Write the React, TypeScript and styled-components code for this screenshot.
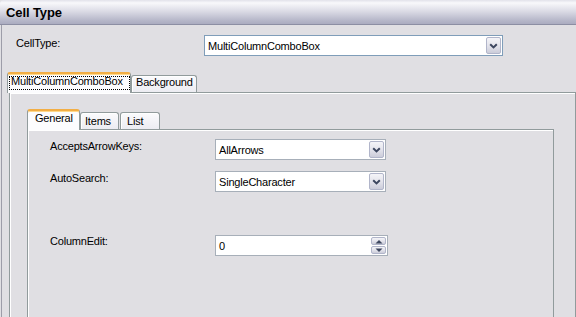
import React from "react";
import styled, { createGlobalStyle } from "styled-components";

const Global = createGlobalStyle`
  html, body { margin: 0; padding: 0; background: #e0dfe3; }
  body {
    font-family: "Liberation Sans", Arial, sans-serif;
    font-size: 11px;
    color: #000;
  }
`;

const Window = styled.div`
  width: 576px;
  height: 317px;
  overflow: hidden;
  display: flex;
  flex-direction: column;
  background: #e0dfe3;
`;

const TitleBar = styled.div`
  flex: none;
  height: 25px;
  box-sizing: border-box;
  border-bottom: 1px solid #8c8ea3;
  border-top-left-radius: 4px;
  background: linear-gradient(
    to bottom,
    #e2e2ea 0%,
    #f8f8fb 12%,
    #d8d8e3 50%,
    #b6b7c9 85%,
    #aaabc0 100%
  );
  padding: 5px 0 0 6px;
  font-size: 13px;
  line-height: 15px;
  font-weight: bold;
  letter-spacing: -0.1px;
`;

const Body = styled.div`
  flex: none;
  margin-left: 1px;
  border-left: 1px solid #9d9da9;
  display: flex;
  flex-direction: column;
`;

const TopRow = styled.div`
  display: flex;
  height: 21px;
  margin-top: 10px;
  padding-left: 14px;
`;

const Label = styled.div<{ $width: number; $top: number }>`
  width: ${(p) => p.$width}px;
  flex: none;
  align-self: flex-start;
  padding-top: ${(p) => p.$top}px;
  line-height: 13px;
  letter-spacing: -0.2px;
`;

const ComboBox = styled.div<{ $width: number; $tone: "blue" | "gray" }>`
  width: ${(p) => p.$width}px;
  height: 21px;
  box-sizing: border-box;
  border: 1px solid ${(p) => (p.$tone === "blue" ? "#7f9db9" : "#a7afb9")};
  background: #fff;
  display: flex;
  align-items: stretch;
`;

const FieldText = styled.div`
  flex: 1;
  display: flex;
  align-items: center;
  padding-left: 3px;
  letter-spacing: -0.2px;
  white-space: nowrap;
`;

const DropButton = styled.div`
  flex: none;
  width: 15px;
  margin: 1px;
  box-sizing: border-box;
  border: 1px solid #b1b5ca;
  border-radius: 2px;
  background: linear-gradient(to bottom, #f4f4f8 0%, #e4e4ec 50%, #cbccd9 100%);
  display: flex;
  align-items: center;
  justify-content: center;
`;

const SpinColumn = styled.div`
  flex: none;
  width: 15px;
  margin: 1px;
  display: flex;
  flex-direction: column;
  gap: 1px;
`;

const SpinButton = styled.div`
  flex: 1;
  box-sizing: border-box;
  border: 1px solid #b1b5ca;
  border-radius: 2px;
  background: linear-gradient(to bottom, #f4f4f8 0%, #e4e4ec 50%, #cbccd9 100%);
  display: flex;
  align-items: center;
  justify-content: center;
`;

const TabControl = styled.div<{ $ml: number; $mt: number }>`
  margin-left: ${(p) => p.$ml}px;
  margin-top: ${(p) => p.$mt}px;
  display: flex;
  flex-direction: column;
`;

const TabStrip = styled.div`
  height: 20px;
  display: flex;
  align-items: flex-end;
  position: relative;
  z-index: 1;
`;

const Tab = styled.div<{ $active?: boolean; $w: number; $ml?: number; $pl: number; $pt: number }>`
  flex: none;
  width: ${(p) => p.$w}px;
  margin-left: ${(p) => p.$ml ?? 0}px;
  box-sizing: border-box;
  height: ${(p) => (p.$active ? 21 : 17)}px;
  margin-bottom: ${(p) => (p.$active ? -1 : 0)}px;
  border: 1px solid #919b9c;
  border-bottom: none;
  border-top: ${(p) => (p.$active ? "2px solid #f2ae45" : "1px solid #919b9c")};
  border-radius: 3px 3px 0 0;
  background: ${(p) =>
    p.$active ? "#fcfcfe" : "linear-gradient(to bottom, #fbfbfd 0%, #ececf2 100%)"};
  box-shadow: ${(p) => (p.$active ? "inset 0 1px 0 #ffd88a" : "inset 1px 1px 0 #fff")};
  padding-left: ${(p) => p.$pl}px;
  padding-top: ${(p) => p.$pt}px;
  line-height: 13px;
  letter-spacing: -0.2px;
  white-space: nowrap;
`;

const FocusRect = styled.div`
  margin: 2px 0 0 1px;
  border: 1px dotted #000;
  line-height: 8px;
  padding: 0 0 4px 1px;
`;

const TabPanel = styled.div<{ $h: number; $pt: number; $pl: number; $pr: number }>`
  height: ${(p) => p.$h}px;
  box-sizing: border-box;
  border: 1px solid #919b9c;
  background: #e0dfe3;
  box-shadow: inset 1px 1px 0 #fff;
  padding: ${(p) => p.$pt}px ${(p) => p.$pr}px 0 ${(p) => p.$pl}px;
  overflow: hidden;
`;

const FieldRow = styled.div<{ $mt: number }>`
  display: flex;
  height: 21px;
  margin-top: ${(p) => p.$mt}px;
`;

const Chevron = () => (
  <svg width="9" height="6" viewBox="0 0 9 6">
    <path d="M1.2 1.2 L4.5 4.4 L7.8 1.2" fill="none" stroke="#3c465f" strokeWidth="2" />
  </svg>
);

const UpArrow = () => (
  <svg width="8" height="5" viewBox="0 0 8 5">
    <path d="M0.5 4.5 L4 1 L7.5 4.5 Z" fill="#3c465f" />
  </svg>
);

const DownArrow = () => (
  <svg width="8" height="5" viewBox="0 0 8 5">
    <path d="M0.5 0.5 L4 4 L7.5 0.5 Z" fill="#3c465f" />
  </svg>
);

const Combo: React.FC<{ width: number; tone: "blue" | "gray"; value: string }> = ({
  width,
  tone,
  value,
}) => (
  <ComboBox $width={width} $tone={tone}>
    <FieldText>{value}</FieldText>
    <DropButton>
      <Chevron />
    </DropButton>
  </ComboBox>
);

export default function App() {
  return (
    <Window>
      <Global />
      <TitleBar>Cell Type</TitleBar>
      <Body>
        <TopRow>
          <Label $width={188} $top={2}>CellType:</Label>
          <Combo width={299} tone="blue" value="MultiColumnComboBox" />
        </TopRow>

        <TabControl $ml={7} $mt={16}>
          <TabStrip>
            <Tab $active $w={124} $ml={-2} $pl={0} $pt={0}>
              <FocusRect>MultiColumnComboBox</FocusRect>
            </Tab>
            <Tab $w={66} $pl={4} $pt={0}>Background</Tab>
          </TabStrip>
          <TabPanel $h={270} $pt={16} $pl={17} $pr={21}>
            <TabControl $ml={0} $mt={0}>
              <TabStrip>
                <Tab $active $w={53} $pl={7} $pt={1}>General</Tab>
                <Tab $w={39} $pl={4} $pt={2}>Items</Tab>
                <Tab $w={40} $ml={1} $pl={6} $pt={2}>List</Tab>
              </TabStrip>
              <TabPanel $h={240} $pt={9} $pl={22} $pr={0}>
                <FieldRow $mt={0}>
                  <Label $width={165} $top={1}>AcceptsArrowKeys:</Label>
                  <Combo width={171} tone="gray" value="AllArrows" />
                </FieldRow>
                <FieldRow $mt={11}>
                  <Label $width={165} $top={1}>AutoSearch:</Label>
                  <Combo width={171} tone="gray" value="SingleCharacter" />
                </FieldRow>
                <FieldRow $mt={43}>
                  <Label $width={165} $top={0}>ColumnEdit:</Label>
                  <ComboBox $width={173} $tone="gray">
                    <FieldText>0</FieldText>
                    <SpinColumn>
                      <SpinButton>
                        <UpArrow />
                      </SpinButton>
                      <SpinButton>
                        <DownArrow />
                      </SpinButton>
                    </SpinColumn>
                  </ComboBox>
                </FieldRow>
              </TabPanel>
            </TabControl>
          </TabPanel>
        </TabControl>
      </Body>
    </Window>
  );
}
